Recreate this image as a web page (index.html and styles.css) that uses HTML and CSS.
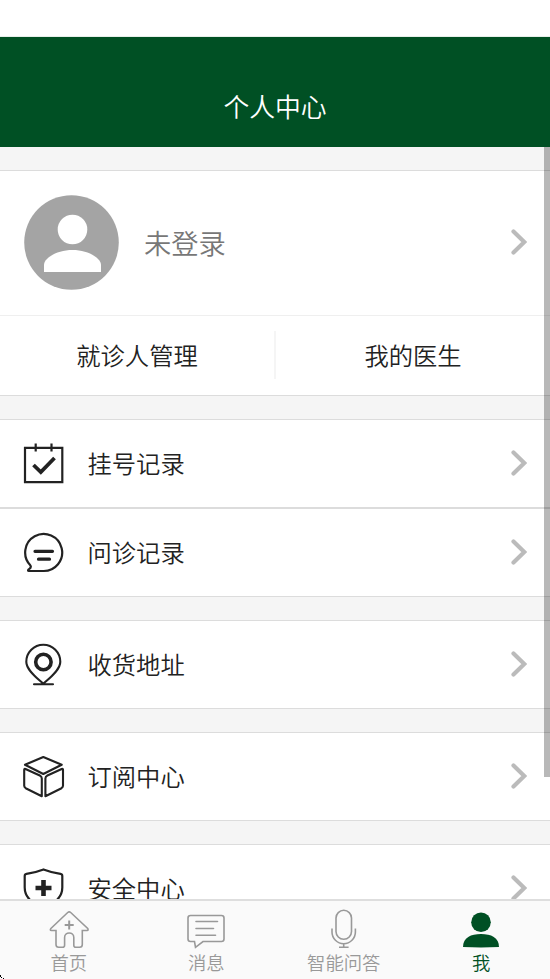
FILE: index.html
```html
<!DOCTYPE html>
<html lang="zh-CN">
<head>
<meta charset="utf-8">
<title>个人中心</title>
<link rel="stylesheet" href="styles.css">
</head>
<body>
<div class="app">
  <div class="status"></div>
  <header class="header"><h1 class="title">个人中心</h1></header>
  <main class="content">
    <div class="scrollbar"></div>
    <section class="card account">
      <a class="profile">
        <svg class="avatar" viewBox="0 0 95 95"><circle cx="47.500" cy="47.500" r="47.300" fill="#a4a4a4"/><circle cx="48.500" cy="34.500" r="14.800" fill="#fff"/><path d="M20 77v-7c0-7 13-15 28.500-15S77 63 77 70v7z" fill="#fff"/></svg>
        <span class="login">未登录</span>
        <svg class="arrow" viewBox="0 0 16 28"><path d="M2.500 3.500 13.300 14 2.500 24.500"/></svg>
      </a>
      <div class="links"><a class="link">就诊人管理</a><a class="link">我的医生</a></div>
    </section>
    <section class="card">
      <a class="row">
        <svg class="icon" viewBox="0 0 44 44"><path d="M4 6.800h37.300v34.300H4zM14.700 2.500v8M30.500 2.500v8" stroke-width="2.200"/><path d="m12.500 24 7.300 7L33.500 17" stroke-width="3.800"/></svg>
        <span class="label">挂号记录</span>
        <svg class="arrow" viewBox="0 0 16 28"><path d="M2.500 3.500 13.300 14 2.500 24.500"/></svg>
      </a>
      <a class="row">
        <svg class="icon" viewBox="0 0 44 44"><path d="M9.500 35.500A18.500 18.500 0 1 1 22 41H8q-1.700-.3-.3-1.600 2.900-1.700 1.800-3.900" stroke-width="2.200"/><path d="M14 21.300h17.500M17.500 29.200h11" stroke-width="3.200" stroke-linecap="round"/></svg>
        <span class="label">问诊记录</span>
        <svg class="arrow" viewBox="0 0 16 28"><path d="M2.500 3.500 13.300 14 2.500 24.500"/></svg>
      </a>
    </section>
    <section class="card">
      <a class="row">
        <svg class="icon" viewBox="0 0 44 44"><path d="M22.300 41.800C17.300 37 5.300 28.500 5.300 19.700a17 17 0 0 1 34 0C39.300 28.500 27.300 37 22.300 41.800M13 42.300h19" stroke-width="2.100" stroke-linecap="round"/><circle cx="22.400" cy="20" r="7.700" stroke-width="3.600"/></svg>
        <span class="label">收货地址</span>
        <svg class="arrow" viewBox="0 0 16 28"><path d="M2.500 3.500 13.300 14 2.500 24.500"/></svg>
      </a>
    </section>
    <section class="card">
      <a class="row">
        <svg class="icon" viewBox="0 0 44 44"><path d="M22.300 3 40.700 10.800 22.300 20 4 10.800zM4.500 15 18.800 21.500q2 1 2 3V42.300L4.700 34.200q-1.500-.9-1.500-2.400V15.700q0-1.300 1.300-.7zM40.700 15 26.400 21.500q-2 1-2 3V42.300L40.500 34.200q1.500-.9 1.500-2.400V15.700q0-1.300-1.300-.7z" stroke-width="2.100" stroke-linejoin="round"/></svg>
        <span class="label">订阅中心</span>
        <svg class="arrow" viewBox="0 0 16 28"><path d="M2.500 3.500 13.300 14 2.500 24.500"/></svg>
      </a>
    </section>
    <section class="card">
      <a class="row">
        <svg class="icon" viewBox="0 0 44 44"><path d="M22.500 3.500Q31 6.800 39.500 7.900q1.800.3 1.800 2.200V21.500C41.300 32 33 38 22.500 42 12 38 3.700 32 3.700 21.500V10.100Q3.700 8.200 5.500 7.900 14 6.800 22.500 3.500z" stroke-width="2.200"/><path d="M22.500 14V30M14.500 22h16" stroke-width="4.600"/></svg>
        <span class="label">安全中心</span>
        <svg class="arrow" viewBox="0 0 16 28"><path d="M2.500 3.500 13.300 14 2.500 24.500"/></svg>
      </a>
    </section>
  </main>
  <nav class="tabs">
    <a class="tab"><svg class="tab-icon" viewBox="0 0 44 44"><path d="M9 24.500H4.500q-2-.2-.6-2L20.700 6.500q1.500-1.200 3 0l17 16q1 1.800-.6 2h-4.800V38.500q0 2.700-2.700 2.700h-3.800q-2 0-2-2V31.500c0-6-9.200-6-9.200 0v7.700q0 2-2 2h-3.900Q9 41.200 9 38.500z"/><path d="M22.200 14.500v9M17.700 19h9" stroke-width="2"/></svg><span>首页</span></a>
    <a class="tab"><svg class="tab-icon" viewBox="0 0 44 44"><path d="M6.500 9.500h31q2.500 0 2.500 2.500v21q0 2.500-2.500 2.500H19l-7.500 5.800L10.500 35.500h-4Q4 35.500 4 33v-21Q4 9.500 6.500 9.500zM12 15.500h21.500M12 22.500h17.500M12 29.200h19.500" stroke-linecap="round"/></svg><span>消息</span></a>
    <a class="tab"><svg class="tab-icon" viewBox="0 0 44 44"><rect x="14" y="4.300" width="15.500" height="29" rx="7.750"/><path d="M10 22.500v3.500a11.700 11.700 0 0 0 23.400 0V22.500M21.700 37.500v3.500M17 41.300h9.600"/></svg><span>智能问答</span></a>
    <a class="tab active"><svg class="tab-icon" viewBox="0 0 44 44"><circle cx="22" cy="16.300" r="9.800"/><path d="M4 41C4 31.500 12 28 22 28S40 31.500 40 41q-18 .8-36 0z"/></svg><span>我</span></a>
  </nav>
  <svg class="corner" viewBox="0 0 4 4" shape-rendering="crispEdges"><path d="M0 0h1v2h-1zM1 2h1v1h-1zM3 3h1v1h-1z"/></svg>
</div>
</body>
</html>
```
FILE: styles.css
```css
* { box-sizing: border-box; }
body {
  margin: 0;
  background: #fff;
  color: #222;
  font-family: "Noto Sans CJK SC", sans-serif;
  font-size: 24.3px;
  font-weight: 400;
  overflow: hidden;
}
.app { position: relative; display: flex; flex-direction: column; height: 979px; }
.status { flex: none; height: 37px; border-bottom: 1px solid #e8efea; }
.header {
  flex: none;
  height: 110px;
  padding-top: 28px;
  display: flex;
  align-items: center;
  justify-content: center;
  background: #005024;
  color: #fff;
}
.title { margin: 0; font-size: 25.8px; font-weight: 350; line-height: 40px; }
.content {
  position: relative;
  flex: 1;
  min-height: 0;
  overflow: hidden;
  background: #f5f5f5;
  padding-top: 23px;
  display: flex;
  flex-direction: column;
  gap: 23px;
}
.scrollbar {
  position: absolute;
  top: 0;
  right: 0;
  width: 6px;
  height: 630px;
  background: rgba(0, 0, 0, .28);
}
.card { flex: none; background: #fff; border-top: 1px solid #dcdcdc; border-bottom: 1px solid #dcdcdc; font-weight: 350; }
.profile {
  display: flex;
  align-items: center;
  height: 145px;
  padding: 0 23px 2px 24px;
  border-bottom: 1px solid #efefef;
}
.avatar { width: 95px; height: 95px; margin-right: 25px; }
.login { flex: 1; font-size: 27.3px; color: #777; }
.arrow { width: 16px; height: 28px; fill: none; stroke: #bbb; stroke-width: 4.200; stroke-linecap: round; }
.links { display: flex; align-items: center; height: 79px; padding-bottom: 1px; }
.link { flex: 1; text-align: center; line-height: 48px; }
.link:first-child { border-right: 1px solid #f5f5f5; }
.link + .link { border-left: 1px solid #f5f5f5; }
.row { display: flex; align-items: center; height: 87px; padding: 0 23px 1px 21px; }
.row + .row { border-top: 2px solid #dcdcdc; height: 89px; }
.icon { width: 44px; height: 44px; margin: -1px 22.5px 0 0; fill: none; stroke: #222; }
.label { flex: 1; margin-top: -2px; }
.tabs { flex: none; height: 80px; display: flex; background: #fafafa; border-top: 2px solid #dedede; }
.tab {
  flex: 1;
  padding-top: 5px;
  display: flex;
  flex-direction: column;
  align-items: center;
  font-size: 18.33px;
  font-weight: 350;
  line-height: 25px;
  color: #999;
}
.tab-icon { width: 44px; height: 44px; fill: none; stroke: #999; stroke-width: 1.6; }
.active { color: #005024; }
.active .tab-icon { fill: #005024; stroke: none; }
.corner { position: absolute; left: 0; bottom: 0; width: 4px; height: 4px; }
```
